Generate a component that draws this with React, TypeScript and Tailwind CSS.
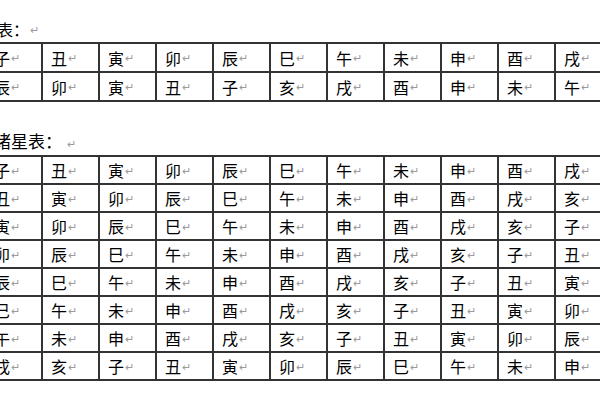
const branches = ["子", "丑", "寅", "卯", "辰", "巳", "午", "未", "申", "酉", "戌", "亥"];

const rot = (n: number) => branches.map((_, i) => branches[(i + n) % 12]);

const table1 = [
  rot(0),
  ["辰", "卯", "寅", "丑", "子", "亥", "戌", "酉", "申", "未", "午", "巳"],
];

const table2 = [rot(0), rot(1), rot(2), rot(3), rot(4), rot(5), rot(6), rot(10)];

function Mark() {
  return <span className="text-[11px] text-[#9a9a9a] ml-[1px]">↵</span>;
}

function Grid({ rows, rowH }: { rows: string[][]; rowH: string }) {
  return (
    <div className="ml-[-16px] w-[686px] border-t-2 border-l-2 border-[#333333]">
      {rows.map((row, r) => (
        <div key={r} className="flex">
          {row.map((c, i) => (
            <div
              key={i}
              className={`w-[57px] shrink-0 ${rowH} border-r-2 border-b-2 border-[#333333] pl-[8px] flex items-center text-[16px] leading-none text-black`}
            >
              {c}
              <Mark />
            </div>
          ))}
        </div>
      ))}
    </div>
  );
}

export default function App() {
  return (
    <div
      className="w-[600px] h-[400px] overflow-hidden bg-white pt-[16px]"
      style={{ fontFamily: '"Noto Sans CJK SC", "Noto Sans CJK JP", sans-serif' }}
    >
      <div className="h-[26px] flex items-center ml-[-3px] text-[16px] text-black">
        表：<Mark />
      </div>
      <Grid rows={table1} rowH="h-[29px]" />
      <div className="mt-[25px] h-[28px] flex items-center ml-[-6px] text-[17px] text-black">
        诸星表：<span className="ml-[4px]"><Mark /></span>
      </div>
      <Grid rows={table2} rowH="h-[28px]" />
    </div>
  );
}
